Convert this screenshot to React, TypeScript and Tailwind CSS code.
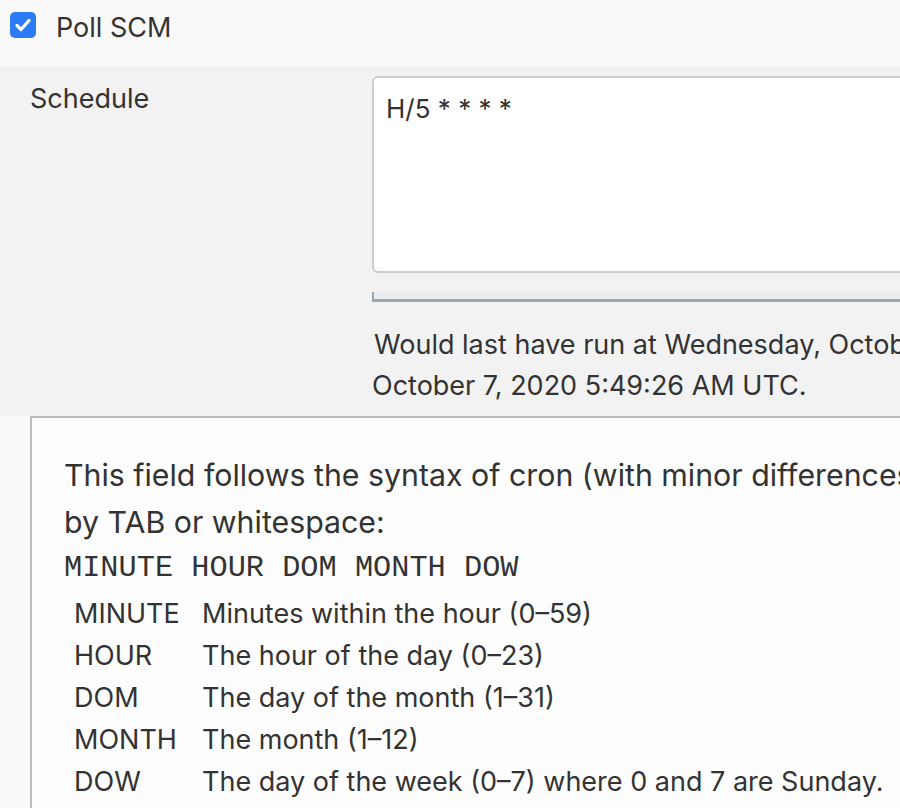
export default function App() {
  const rows = [
    ['MINUTE', 'Minutes within the hour (0–59)'],
    ['HOUR', 'The hour of the day (0–23)'],
    ['DOM', 'The day of the month (1–31)'],
    ['MONTH', 'The month (1–12)'],
    ['DOW', 'The day of the week (0–7) where 0 and 7 are Sunday.'],
  ];

  return (
    <div className="w-[900px] h-[808px] overflow-hidden bg-[#f9f9f9] text-[#333] font-['Inter',sans-serif] text-[27px]">
      {/* Poll SCM checkbox row */}
      <div className="h-[66px] flex items-start pt-[12px] pl-[10px]">
        <span className="w-[26px] h-[26px] rounded-[5px] bg-[#2d7cf6] flex items-center justify-center shrink-0">
          <svg width="18" height="18" viewBox="0 0 18 18" fill="none">
            <path d="M3 9.5l4 4 8-9" stroke="white" strokeWidth="3.2" strokeLinecap="round" strokeLinejoin="round" />
          </svg>
        </span>
        <span className="ml-[20px] leading-[30px] mt-[1px]">Poll SCM</span>
      </div>

      {/* Schedule row */}
      <div className="bg-[#f2f2f2] h-[350px] flex">
        <div className="w-[372px] shrink-0 pl-[30px] pt-[16px] leading-[34px]">Schedule</div>
        <div className="w-[1000px] shrink-0 pt-[10px]">
          <div className="h-[197px] bg-white border-2 border-[#cccccc] rounded-[6px] px-[12px] pt-[14px] leading-[34px] text-[26px]">
            H/5 * * * *
          </div>
          <div className="mt-[19px] h-[10px] bg-[#eaedf0] border-l-2 border-b-[3px] border-[#9aa5ad]" />
          <div className="mt-[22px] leading-[41px] whitespace-nowrap">
            <div className="pl-[2px]">Would last have run at Wednesday, October 7, 2020 5:44:26 AM UTC; would next run at</div>
            <div>October 7, 2020 5:49:26 AM UTC.</div>
          </div>
        </div>
      </div>

      {/* Help box */}
      <div className="ml-[30px] w-[1000px] h-[400px] bg-[#fdfdfd] border-l-2 border-t-2 border-[#bdbdbd] pl-[32px] pt-[34px]">
        <div className="leading-[47px] text-[30.3px] whitespace-nowrap">
          <div>This field follows the syntax of cron (with minor differences). Specifically, each line consists of 5 fields separated</div>
          <div>by TAB or whitespace:</div>
        </div>
        <div className="font-['Liberation_Mono',monospace] text-[30.3px] leading-[45px] whitespace-nowrap">
          MINUTE HOUR DOM MONTH DOW
        </div>
        <table className="mt-[2px] text-[27px]">
          <tbody>
            {rows.map(([k, v]) => (
              <tr key={k} className="h-[42px]">
                <td className="w-[138px] pl-[10px] align-middle">{k}</td>
                <td className="align-middle whitespace-nowrap">{v}</td>
              </tr>
            ))}
          </tbody>
        </table>
      </div>
    </div>
  );
}
